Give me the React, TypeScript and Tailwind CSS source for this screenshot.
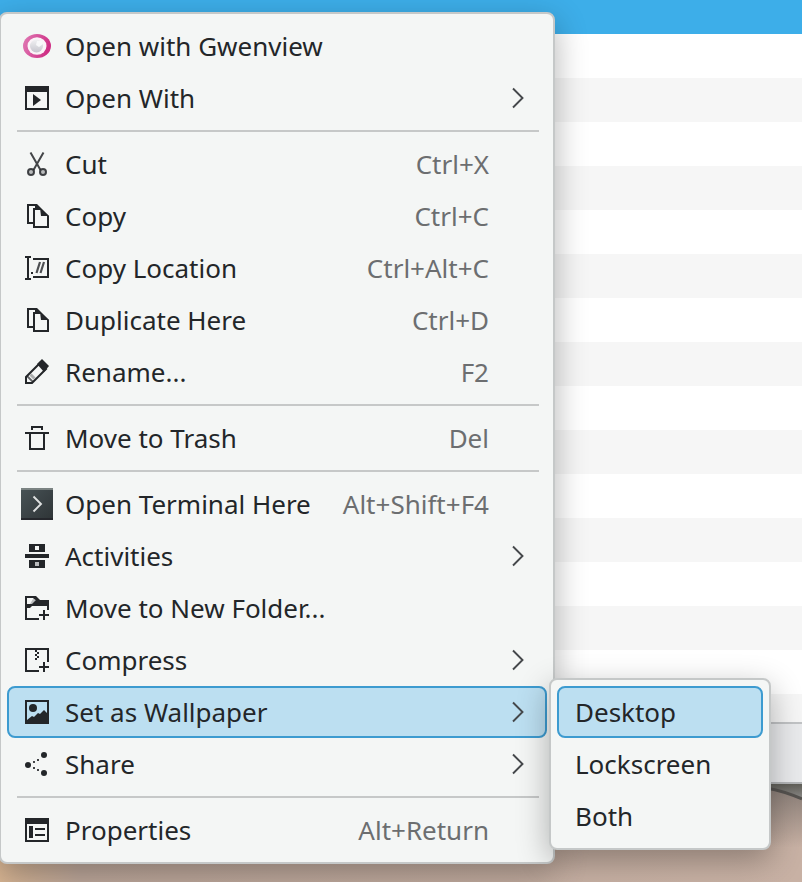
import React from "react";

interface MenuItem {
  label: string;
  icon: React.ReactNode;
  shortcut?: string;
  submenu?: boolean;
  active?: boolean;
}

const INK = "#232629";

// All glyphs share a 32px box with a 24px drawing area inside it
const Glyph: React.FC<{ children: React.ReactNode }> = ({ children }) => (
  <svg width="32" height="32" viewBox="0 0 32 32" fill="none" className="shrink-0">
    {children}
  </svg>
);

const GwenviewIcon = () => (
  <Glyph>
    <defs>
      <linearGradient id="ring" x1="0" y1="0" x2="1" y2="0.3">
        <stop offset="0" stopColor="#e07cb6" />
        <stop offset="1" stopColor="#cf2f85" />
      </linearGradient>
      <linearGradient id="lens" x1="0" y1="0" x2="0" y2="1">
        <stop offset="0" stopColor="#f1f1f3" />
        <stop offset="1" stopColor="#c6c5ce" />
      </linearGradient>
    </defs>
    <ellipse cx="16" cy="16" rx="14" ry="12" fill="url(#ring)" />
    <ellipse cx="16" cy="16" rx="9.500" ry="8.800" fill="#fbf3f8" />
    <circle cx="15.500" cy="16" r="6.500" fill="url(#lens)" />
    <path d="M15 15l3 2 4-3-1-3h-5z" fill="#f8f8fa" />
  </Glyph>
);

const OpenWithIcon = () => (
  <Glyph>
    <path d="M4 4h24v24H4zM6 10v16h20V10z" fill={INK} fillRule="evenodd" />
    <path d="M12 12l8 6-8 6z" fill={INK} />
  </Glyph>
);

const CutIcon = () => (
  <Glyph>
    <path d="M9.5 4.5L19.500 22M22.5 4.5L12.500 22" stroke={INK} strokeOpacity="0.85" strokeWidth="2" />
    <circle cx="10" cy="24" r="3" fill="#b9bbbc" stroke={INK} strokeOpacity="0.85" strokeWidth="2" />
    <circle cx="22" cy="24" r="3" fill="#b9bbbc" stroke={INK} strokeOpacity="0.85" strokeWidth="2" />
  </Glyph>
);

const CopyIcon = () => (
  <Glyph>
    <path d="M6 4h10l4 4h-8v14h2v2H6zM8 6v16h4V8h2V6z" fill={INK} fillRule="evenodd" />
    <path d="M12 8h8l8 8v12H12zM14 10v16h12V16h-6v-6z" fill={INK} fillRule="evenodd" />
    <path d="M19 8l9 8h-8z" fill={INK} />
  </Glyph>
);

const CopyLocationIcon = () => (
  <Glyph>
    <path d="M4 4h6v2H8v20h2v2H4v-2h2V6H4zM12 6h16v20H12v-2h14V8H12zM10 20h2v2h-2z" fill={INK} />
    <path d="M15.500 21L19 10M19.500 21L23 10" stroke={INK} strokeOpacity="0.8" strokeWidth="2.200" />
  </Glyph>
);

const RenameIcon = () => (
  <Glyph>
    <path d="M5 27v-6L19 7l6 6-14 14z" stroke={INK} strokeWidth="2" />
    <path d="M16 8l5-5 7 7-5 6z" fill={INK} />
    <path d="M6 20l6 6" stroke={INK} strokeOpacity="0.7" strokeWidth="1.800" />
    <path d="M9.500 18.500l4 4" stroke={INK} strokeOpacity="0.35" strokeWidth="3" />
  </Glyph>
);

const TrashIcon = () => (
  <Glyph>
    <path d="M10 4h12v4h-2V6h-8v2h-2zM4 10h24v2h-4v16H8V12H4zM10 12v14h12V12z" fill={INK} fillRule="evenodd" />
  </Glyph>
);

const TerminalIcon = () => (
  <Glyph>
    <defs>
      <linearGradient id="term" x1="0" y1="0" x2="1" y2="1">
        <stop offset="0" stopColor="#485356" />
        <stop offset="1" stopColor="#2e3436" />
      </linearGradient>
    </defs>
    <path d="M0 0h32v32H0z" fill="url(#term)" />
    <path d="M0 0h32v2H0z" fill="#7b8382" />
    <path d="M0 30h32v2H0z" fill="#25272c" />
    <path d="M12.500 8.500l7.500 7.500-7.500 7.500" stroke="#dfe1e1" strokeWidth="1.900" />
  </Glyph>
);

const ActivitiesIcon = () => (
  <Glyph>
    <path d="M8 4h16v8H8zM14 6v4h4V6zM4 14h24v4H4zM8 20h16v8H8zM14 22v4h4v-4z" fill={INK} fillRule="evenodd" />
    <path d="M14 22h4v4h-4z" fill="#b9bbbc" />
  </Glyph>
);

const NewFolderIcon = () => (
  <Glyph>
    <path d="M4 4h11l4 4h9v10h-2v-4H11l-2 2H6v10h12v2H4zM6 6v6h4l4-4-2-2z" fill={INK} fillRule="evenodd" />
    <path d="M22 18h2v4h4v2h-4v4h-2v-4h-4v-2h4z" fill={INK} />
    <path d="M9 12l3-5 3 1-4 4z" fill="#babcbd" />
  </Glyph>
);

const CompressIcon = () => (
  <Glyph>
    <path d="M4 4h24v14h-2V6H6v20h12v2H4z" fill={INK} />
    <path d="M14 6h2v2h-2zM16 8h2v2h-2zM14 10h2v2h-2zM16 12h2v2h-2zM14 14h2v2h-2z" fill={INK} />
    <path d="M22 18h2v4h4v2h-4v4h-2v-4h-4v-2h4z" fill={INK} />
  </Glyph>
);

const WallpaperIcon = () => (
  <Glyph>
    <path d="M4 4h24v24H4zM6 6v18l5-4 2 1 4-4 2 1 4-4 3 3V6z" fill={INK} fillRule="evenodd" />
    <circle cx="12" cy="12" r="4" fill={INK} />
  </Glyph>
);

const ShareIcon = () => (
  <Glyph>
    <circle cx="7" cy="17" r="3" fill={INK} />
    <circle cx="23" cy="7" r="3" fill={INK} />
    <circle cx="23" cy="25" r="3" fill={INK} />
    <path d="M12 13h2v2h-2zM16 11h2v2h-2zM12 19h2v2h-2zM16 21h2v2h-2z" fill={INK} fillOpacity="0.85" />
  </Glyph>
);

const PropertiesIcon = () => (
  <Glyph>
    <path d="M4 4h24v24H4zM6 10v16h20V10z" fill={INK} fillRule="evenodd" />
    <path d="M8 12h4v12H8zM14 14h10v2H14zM14 20h10v2H14z" fill={INK} />
  </Glyph>
);

const Chevron = () => (
  <svg width="14" height="22" viewBox="0 0 14 22" fill="none">
    <path d="M2 1.500l9.500 9.500L2 20.500" stroke="#45484b" strokeWidth="1.900" />
  </svg>
);

const groups: MenuItem[][] = [
  [
    { label: "Open with Gwenview", icon: <GwenviewIcon /> },
    { label: "Open With", icon: <OpenWithIcon />, submenu: true },
  ],
  [
    { label: "Cut", icon: <CutIcon />, shortcut: "Ctrl+X" },
    { label: "Copy", icon: <CopyIcon />, shortcut: "Ctrl+C" },
    { label: "Copy Location", icon: <CopyLocationIcon />, shortcut: "Ctrl+Alt+C" },
    { label: "Duplicate Here", icon: <CopyIcon />, shortcut: "Ctrl+D" },
    { label: "Rename...", icon: <RenameIcon />, shortcut: "F2" },
  ],
  [{ label: "Move to Trash", icon: <TrashIcon />, shortcut: "Del" }],
  [
    { label: "Open Terminal Here", icon: <TerminalIcon />, shortcut: "Alt+Shift+F4" },
    { label: "Activities", icon: <ActivitiesIcon />, submenu: true },
    { label: "Move to New Folder...", icon: <NewFolderIcon /> },
    { label: "Compress", icon: <CompressIcon />, submenu: true },
    { label: "Set as Wallpaper", icon: <WallpaperIcon />, submenu: true, active: true },
    { label: "Share", icon: <ShareIcon />, submenu: true },
  ],
  [{ label: "Properties", icon: <PropertiesIcon />, shortcut: "Alt+Return" }],
];

const wallpaperTargets = ["Desktop", "Lockscreen", "Both"];

const MenuRow: React.FC<{ item: MenuItem }> = ({ item }) => (
  <div
    className={`flex h-[52px] items-center rounded-lg border-2 pl-3 ${
      item.active ? "border-[#3d9bd0] bg-[#bcdff1]" : "border-transparent"
    }`}
  >
    {item.icon}
    <span className="ml-3 whitespace-nowrap">{item.label}</span>
    {item.shortcut && <span className="ml-auto pr-14 text-[#6c6e70]">{item.shortcut}</span>}
    {item.submenu && (
      <span className="ml-auto pr-5">
        <Chevron />
      </span>
    )}
  </div>
);

const FileList = () => (
  <div className="flex h-[784px] flex-col border-b-2 border-[#b3b5b7] bg-white">
    <div className="h-[34px] shrink-0 bg-[#3daee9]" />
    <div className="flex-1 overflow-hidden">
      {Array.from({ length: 16 }, (_, i) => (
        <div key={i} className="h-11 odd:bg-white even:bg-[#f6f6f6]" />
      ))}
    </div>
    <div className="h-[60px] shrink-0 border-t-2 border-[#c1c3c5] bg-[#e9eaec]" />
  </div>
);

// Corner of the desktop wallpaper that shows under the window
const WallpaperCorner = () => (
  <svg className="absolute right-0 bottom-0" width="60" height="98" viewBox="0 0 60 98" fill="none">
    <defs>
      <linearGradient id="desk" x1="0" y1="0" x2="0" y2="1">
        <stop offset="0" stopColor="#857a74" />
        <stop offset="0.65" stopColor="#857a74" stopOpacity="0" />
      </linearGradient>
      <linearGradient id="edge" x1="0" y1="0" x2="0" y2="1">
        <stop offset="0" stopColor="#605f58" />
        <stop offset="1" stopColor="#8c8a88" />
      </linearGradient>
    </defs>
    <path d="M0 0h60v98H0z" fill="url(#desk)" />
    <path d="M0 0h60v15Q42 7 24 4H0z" fill="url(#edge)" />
    <path d="M24 4Q42 7 60 15" stroke="#55524f" strokeWidth="3" />
  </svg>
);

const App: React.FC = () => {
  return (
    <div className="relative h-[882px] w-[802px] overflow-hidden bg-linear-to-r from-[#d8b593] via-[#c0aa9d] via-10% to-[#c8b1a4] font-['Noto_Sans',sans-serif] text-[26px] leading-none text-[#232629]">
      <FileList />
      <WallpaperCorner />

      <div className="absolute top-3 -left-px w-[556px] rounded-lg border-2 border-[#c5c8c8] bg-[#f4f6f5] p-1.5 shadow-[0_10px_32px_rgba(0,0,0,0.3)]">
        {groups.map((group, i) => (
          <React.Fragment key={i}>
            {i > 0 && <div className="my-1.5 mr-2 ml-2.5 h-0.5 bg-[#c6c8c8]" />}
            {group.map((item) => (
              <MenuRow key={item.label} item={item} />
            ))}
          </React.Fragment>
        ))}
      </div>

      <div className="absolute top-[678px] left-[549px] w-[222px] rounded-lg border-2 border-[#c5c8c8] bg-[#f4f6f5] p-1.5 shadow-[0_10px_32px_rgba(0,0,0,0.3)]">
        {wallpaperTargets.map((target, i) => (
          <div
            key={target}
            className={`flex h-[52px] items-center rounded-lg border-2 pl-4 ${
              i === 0 ? "border-[#3d9bd0] bg-[#bcdff1]" : "border-transparent"
            }`}
          >
            {target}
          </div>
        ))}
      </div>
    </div>
  );
};

export default App;
